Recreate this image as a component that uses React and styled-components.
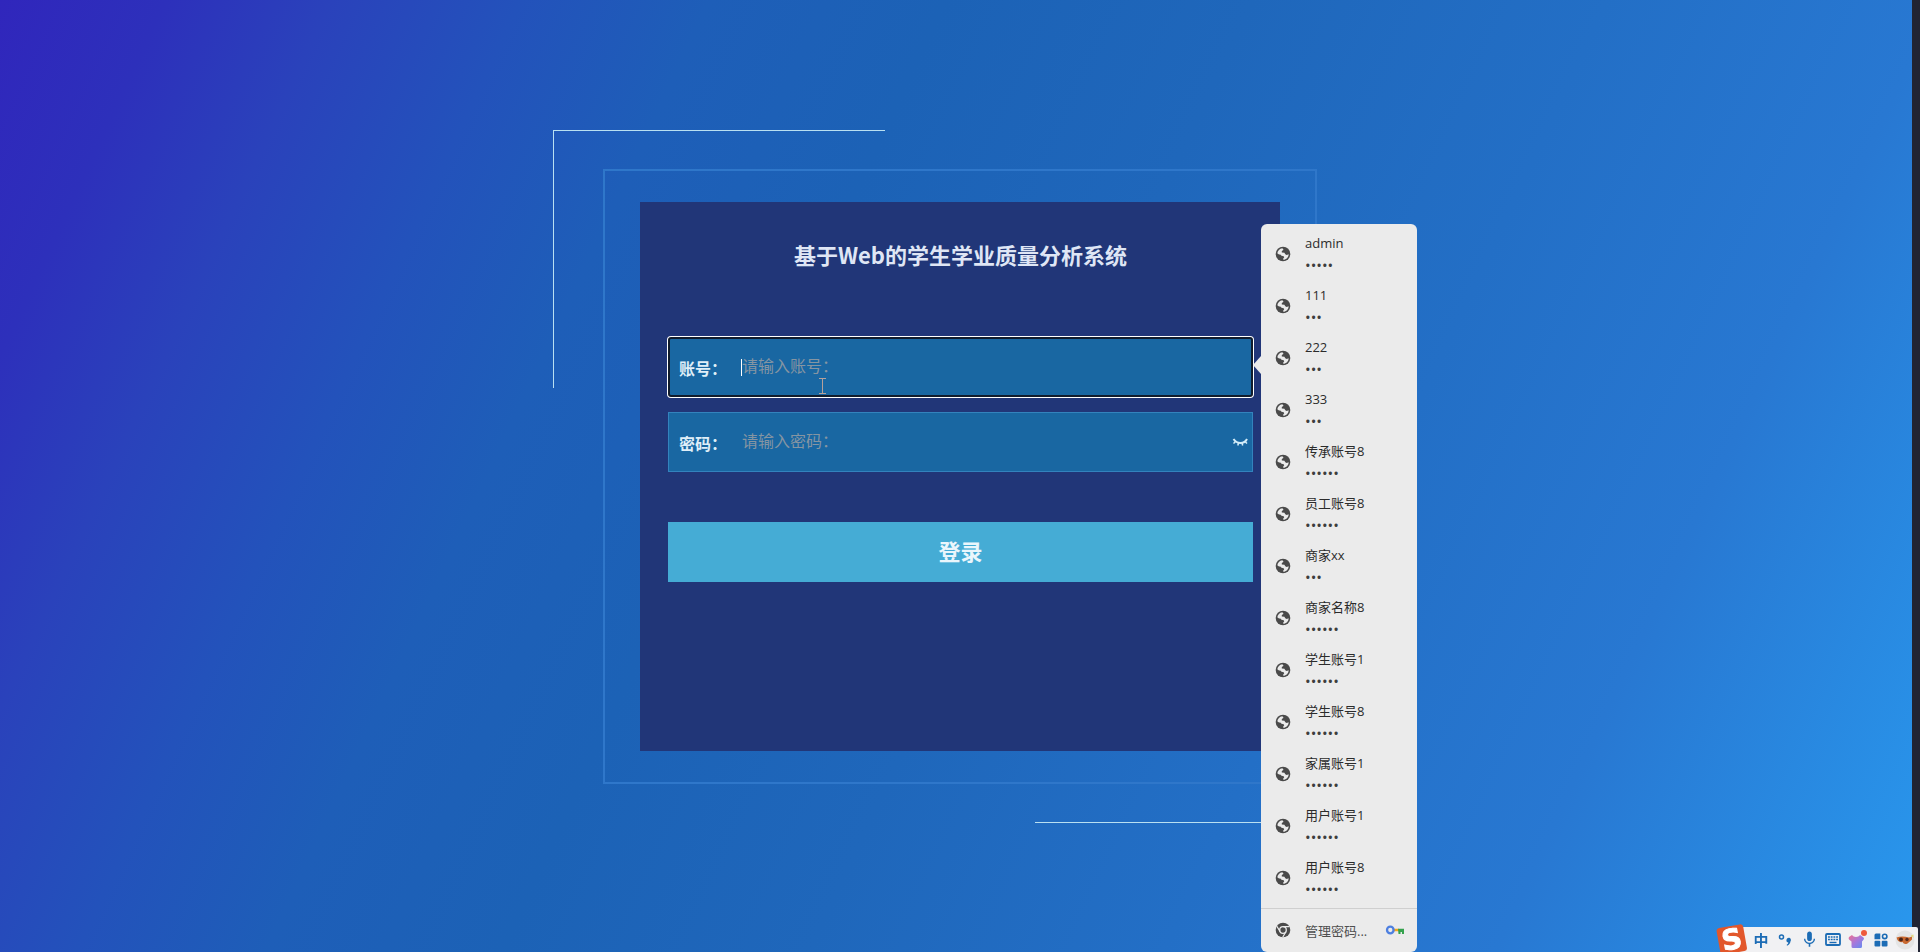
import React from "react";
import styled, { createGlobalStyle } from "styled-components";
import { MdMic } from "react-icons/md";

const GlobalStyle = createGlobalStyle`
  *, *::before, *::after { box-sizing: border-box; }
  body {
    margin: 0;
    font-family: "Open Sans", "Noto Sans CJK SC", sans-serif;
  }
  button, input { font: inherit; }
`;

const Page = styled.main`
  min-height: 100vh;
  display: flex;
  align-items: center;
  justify-content: center;
  overflow: hidden;
  background: linear-gradient(
    115deg,
    #3026bc 0%,
    #2d30bb 7%,
    #2a42bb 14%,
    #2352bb 22%,
    #1e5eb8 30%,
    #1c62b6 40%,
    #1f67bb 53%,
    #236fc6 68%,
    #2878d2 82%,
    #2998ee 100%
  );
`;

const ScreenEdge = styled.div`
  position: fixed;
  top: 0;
  right: 0;
  bottom: 0;
  width: 8px;
  background: #212433;
`;

const Brackets = styled.div`
  position: relative;
  width: 814px;
  max-width: 100%;
  padding: 39px 50px;

  &::before,
  &::after {
    content: "";
    position: absolute;
    width: 332px;
    height: 258px;
    border: 0 solid #b9e0f2;
  }
  &::before {
    top: 0;
    left: 0;
    border-width: 1px 0 0 1px;
  }
  &::after {
    right: 0;
    bottom: 0;
    border-width: 0 1px 1px 0;
  }
`;

const Frame = styled.div`
  padding: 31px 35px;
  border: 2px solid #2f77ca;
`;

const Card = styled.form`
  min-height: 549px;
  padding: 36px 27px 0 28px;
  display: flex;
  flex-direction: column;
  background: #213678;
`;

const Title = styled.h1`
  margin: 0 0 67px;
  font-family: "Noto Sans CJK SC", sans-serif;
  font-size: 22px;
  line-height: 32px;
  font-weight: 700;
  text-align: center;
  color: #dfe6f5;
`;

const Field = styled.div`
  position: relative;
  height: 60px;
  margin-bottom: 15px;
  padding-right: 4px;
  padding-left: ${(p) => (p.$active ? "9px" : "10px")};
  display: flex;
  align-items: center;
  background: #1967a2;
  border: ${(p) => (p.$active ? "2px solid #111c2c" : "1px solid #3383bd")};
  border-radius: ${(p) => (p.$active ? "3px" : "0")};
  box-shadow: ${(p) => (p.$active ? "0 0 0 1px #ffffff" : "none")};
`;

const FieldLabel = styled.label`
  width: 63px;
  padding-top: 2px;
  flex: none;
  font-family: "Noto Sans CJK SC", sans-serif;
  font-size: 16px;
  line-height: 24px;
  font-weight: 700;
  white-space: nowrap;
  color: #dfeef8;
`;

const FieldInput = styled.input`
  flex: 1;
  min-width: 0;
  height: 28px;
  padding: 0 0 4px;
  border: 0;
  outline: 0;
  background: transparent;
  font-family: "Noto Sans CJK SC", sans-serif;
  font-size: 16px;
  line-height: 24px;
  color: #ffffff;

  &::placeholder {
    color: #8595a2;
    opacity: 1;
  }
`;

const Caret = styled.span`
  position: absolute;
  top: 20px;
  left: 71px;
  width: 1px;
  height: 17px;
  background: #ffffff;
`;

const MousePointer = styled.svg`
  position: absolute;
  top: 38px;
  left: 148px;
`;

const EyeButton = styled.button`
  flex: none;
  width: 16px;
  height: 16px;
  padding: 0;
  border: 0;
  background: none;
  color: #d3ecf8;

  svg { display: block; }
`;

const LoginButton = styled.button`
  height: 60px;
  margin-top: 35px;
  padding: 0 0 4px;
  border: 0;
  background: #45acd5;
  font-family: "Noto Sans CJK SC", sans-serif;
  font-size: 22px;
  font-weight: 700;
  color: #eaf6fc;
`;

const Suggestions = styled.div`
  position: absolute;
  z-index: 2;
  top: -115px;
  left: calc(100% + 10px);
  width: 156px;
  border-radius: 6px;
  background: #ebebeb;
  color: #2b2b2b;

  &::before {
    content: "";
    position: absolute;
    top: 132px;
    right: 100%;
    border: solid transparent;
    border-width: 9px 8px 9px 0;
    border-right-color: #ebebeb;
  }
`;

const AccountList = styled.ul`
  margin: 0;
  padding: 4px 0;
  list-style: none;
`;

const popupRow = `
  width: 100%;
  border: 0;
  background: none;
  display: flex;
  align-items: center;
  text-align: left;
  font-size: 13px;
  color: inherit;
`;

const AccountRow = styled.button`
  ${popupRow}
  height: 52px;
  padding: 0 13px;
  gap: 13px;

  svg { flex: none; }
`;

const AccountText = styled.span`
  display: flex;
  flex-direction: column;
`;

const AccountName = styled.span`
  line-height: 22px;
`;

const AccountMask = styled.span`
  font-size: 15px;
  line-height: 22px;
  color: #3d3d3d;
`;

const ManageRow = styled.button`
  ${popupRow}
  height: 44px;
  padding: 0 12px 0 13px;
  gap: 13px;
  border-top: 1px solid #cfcfcf;
  color: #4f4f4f;

  svg { flex: none; }
`;

const ManageText = styled.span`
  flex: 1;
  white-space: nowrap;
`;

const InputBar = styled.div`
  position: fixed;
  z-index: 3;
  right: 2px;
  bottom: 0;
  height: 25px;
  padding-right: 1px;
  display: flex;
  align-items: center;
  background: linear-gradient(to right, transparent 16px, #f1f1f3 16px);
  border-radius: 0 2px 0 0;
`;

const LogoButton = styled.button`
  align-self: flex-end;
  width: 32px;
  height: 28px;
  margin-right: 1px;
  padding: 0;
  border: 0;
  background: none;

  svg { display: block; }
`;

const BarButton = styled.button`
  width: 24px;
  height: 25px;
  padding: 0;
  border: 0;
  display: flex;
  align-items: center;
  justify-content: center;
  background: none;
  font-family: "Noto Sans CJK SC", sans-serif;
  font-size: 15px;
  line-height: 24px;
  font-weight: 700;
  color: #1c6cb5;
`;

const GlobeIcon = () => (
  <svg width="18" height="18" viewBox="0 0 18 18">
    <circle cx="9" cy="9" r="7.300" fill="#4a4a4a" />
    <path
      d="M3.300 8.200C3.700 5.600 5.600 3.600 8.300 3.200L9.300 4.200V5L7.800 5.900V7.400L10.400 7.700L11.300 9.300L12.700 9.900L14.700 9.200C14.500 12.300 12.300 14.600 9.300 14.800L9.200 13.600L10.200 12.400L9.700 11.200L7.500 10.800L6.300 9.500L5 9.600Z"
      fill="#ebebeb"
    />
  </svg>
);

const EyeClosedIcon = () => (
  <svg width="16" height="16" viewBox="0 0 16 16" fill="none" stroke="currentColor" strokeWidth="2">
    <path d="M1.500 5C3.500 8 6 9 8.500 9S13.500 8 15 5" />
    <path d="M3.500 7.500L1.500 9.500M6.500 9L5.800 11.500M10 9L10.700 11.500M13 7.500L15 9.500" strokeWidth="1.500" />
  </svg>
);

const ChromeIcon = () => (
  <svg width="18" height="18" viewBox="0 0 18 18">
    <circle cx="9" cy="9" r="7.300" fill="#4a4a4a" />
    <circle cx="9" cy="9" r="3.300" fill="#4a4a4a" stroke="#ebebeb" strokeWidth="1.300" />
    <path d="M9 5.700H15.500M6.100 10.600L2.700 5M11.900 10.700L8.700 16.300" stroke="#ebebeb" strokeWidth="1.200" />
  </svg>
);

const KeyIcon = () => (
  <svg width="20" height="12" viewBox="0 0 20 12">
    <path d="M8 6H14" stroke="#f2a51d" strokeWidth="2.500" />
    <path d="M13 4.700H19V10H17V8H15.500V10H13.500Z" fill="#35a24e" />
    <circle cx="5.300" cy="6" r="3.300" fill="none" stroke="#4d7fe0" strokeWidth="2.300" />
  </svg>
);

const SogouLogo = () => (
  <svg width="32" height="28" viewBox="0 0 32 28">
    <g transform="rotate(-10 16 14)">
      <rect x="2" y="2" width="27" height="27" rx="3" fill="#e2572b" />
      <text
        x="15.500"
        y="25"
        textAnchor="middle"
        fontFamily="DejaVu Sans"
        fontWeight="700"
        fontSize="28"
        fill="#ffffff"
        stroke="#ffffff"
        strokeWidth="1"
      >
        S
      </text>
    </g>
  </svg>
);

const PunctuationIcon = () => (
  <svg width="14" height="14" viewBox="0 0 14 14">
    <circle cx="3.500" cy="4" r="2" fill="none" stroke="currentColor" strokeWidth="1.500" />
    <path d="M8.500 7A2.200 2.200 0 1 1 12.500 8.200C12.300 10.500 11 12 9 12.700L8.700 11.800C9.800 11.200 10.300 10.500 10.300 9.600A2.200 2.200 0 0 1 8.500 7Z" fill="currentColor" />
  </svg>
);

const KeyboardIcon = () => (
  <svg width="16" height="13" viewBox="0 0 16 13">
    <rect x="1" y="1" width="14" height="11" rx="1" fill="none" stroke="currentColor" strokeWidth="1.800" />
    <path d="M3 4H13M3 6.500H13" stroke="currentColor" strokeWidth="1.600" strokeDasharray="1.900 0.800" />
    <path d="M4.500 9.500H11.500" stroke="currentColor" strokeWidth="1.400" />
  </svg>
);

const ShirtIcon = () => (
  <svg width="20" height="20" viewBox="0 0 20 20">
    <defs>
      <linearGradient id="shirt" x1="0" y1="0" x2="1" y2="1">
        <stop offset="0" stopColor="#ef6f8f" />
        <stop offset="0.500" stopColor="#a678dc" />
        <stop offset="1" stopColor="#5b8df2" />
      </linearGradient>
    </defs>
    <path
      d="M5 5C6.500 7.500 11.500 7.500 13 5L16.500 7.500Q17.500 8.500 16.500 9.800L15 11.500V16.500Q15 18 13.500 18H6Q4.500 18 4.500 16.500V11.500L2 9.500Q1.200 8.300 2 7Z"
      fill="url(#shirt)"
    />
    <circle cx="17" cy="3" r="3" fill="#ef5a3c" />
  </svg>
);

const AppsIcon = () => (
  <svg width="14" height="14" viewBox="0 0 14 14" fill="currentColor">
    <path d="M2 0.500H6.300V6.300H0.500V2Q0.500 0.500 2 0.500Z" />
    <circle cx="10.700" cy="3.400" r="2.200" fill="none" stroke="currentColor" strokeWidth="1.600" />
    <rect x="0.500" y="7.700" width="5.800" height="5.800" rx="1" />
    <rect x="7.700" y="7.700" width="5.800" height="5.800" rx="1" />
  </svg>
);

const AvatarIcon = () => (
  <svg width="20" height="20" viewBox="0 0 20 20">
    <circle cx="10" cy="10" r="9.500" fill="#e4e4e4" />
    <path d="M1.500 7.500Q7 5.500 14 7.500L17 6.500V9.500L12.500 13.500Q9 15 7.500 12Q3 13 1.500 7.500Z" fill="#c9682f" />
    <circle cx="6" cy="9.500" r="2" fill="#4a2418" />
    <circle cx="12" cy="9.500" r="1.700" fill="#5b2c1b" />
    <path d="M15.500 5.500L18.500 4.500V8Z" fill="#e2dc86" />
  </svg>
);

const accounts = [
  { name: "admin", length: 5 },
  { name: "111", length: 3 },
  { name: "222", length: 3 },
  { name: "333", length: 3 },
  { name: "传承账号8", length: 6 },
  { name: "员工账号8", length: 6 },
  { name: "商家xx", length: 3 },
  { name: "商家名称8", length: 6 },
  { name: "学生账号1", length: 6 },
  { name: "学生账号8", length: 6 },
  { name: "家属账号1", length: 6 },
  { name: "用户账号1", length: 6 },
  { name: "用户账号8", length: 6 },
];

function SavedAccounts() {
  return (
    <Suggestions>
      <AccountList>
        {accounts.map(({ name, length }) => (
          <li key={name}>
            <AccountRow type="button">
              <GlobeIcon />
              <AccountText>
                <AccountName>{name}</AccountName>
                <AccountMask>{"•".repeat(length)}</AccountMask>
              </AccountText>
            </AccountRow>
          </li>
        ))}
      </AccountList>
      <ManageRow type="button">
        <ChromeIcon />
        <ManageText>管理密码...</ManageText>
        <KeyIcon />
      </ManageRow>
    </Suggestions>
  );
}

function InputMethodBar() {
  return (
    <InputBar>
      <LogoButton type="button"><SogouLogo /></LogoButton>
      <BarButton type="button">中</BarButton>
      <BarButton type="button"><PunctuationIcon /></BarButton>
      <BarButton type="button"><MdMic size={19} /></BarButton>
      <BarButton type="button"><KeyboardIcon /></BarButton>
      <BarButton type="button"><ShirtIcon /></BarButton>
      <BarButton type="button"><AppsIcon /></BarButton>
      <BarButton type="button"><AvatarIcon /></BarButton>
    </InputBar>
  );
}

export default function App() {
  return (
    <>
      <GlobalStyle />
      <Page>
        <Brackets>
          <Frame>
            <Card onSubmit={(e) => e.preventDefault()}>
              <Title>基于Web的学生学业质量分析系统</Title>
              <Field $active>
                <FieldLabel htmlFor="account">账号：</FieldLabel>
                <FieldInput id="account" type="text" placeholder="请输入账号：" />
                <Caret />
                <MousePointer width="9" height="18" viewBox="0 0 9 18" fill="none" stroke="#b5a09a">
                  <path d="M1 1.500H8M1 16.500H8M4.500 1.500V16.500" />
                </MousePointer>
                <SavedAccounts />
              </Field>
              <Field>
                <FieldLabel htmlFor="password">密码：</FieldLabel>
                <FieldInput id="password" type="password" placeholder="请输入密码：" />
                <EyeButton type="button" aria-label="显示密码"><EyeClosedIcon /></EyeButton>
              </Field>
              <LoginButton type="submit">登录</LoginButton>
            </Card>
          </Frame>
        </Brackets>
      </Page>
      <ScreenEdge />
      <InputMethodBar />
    </>
  );
}
